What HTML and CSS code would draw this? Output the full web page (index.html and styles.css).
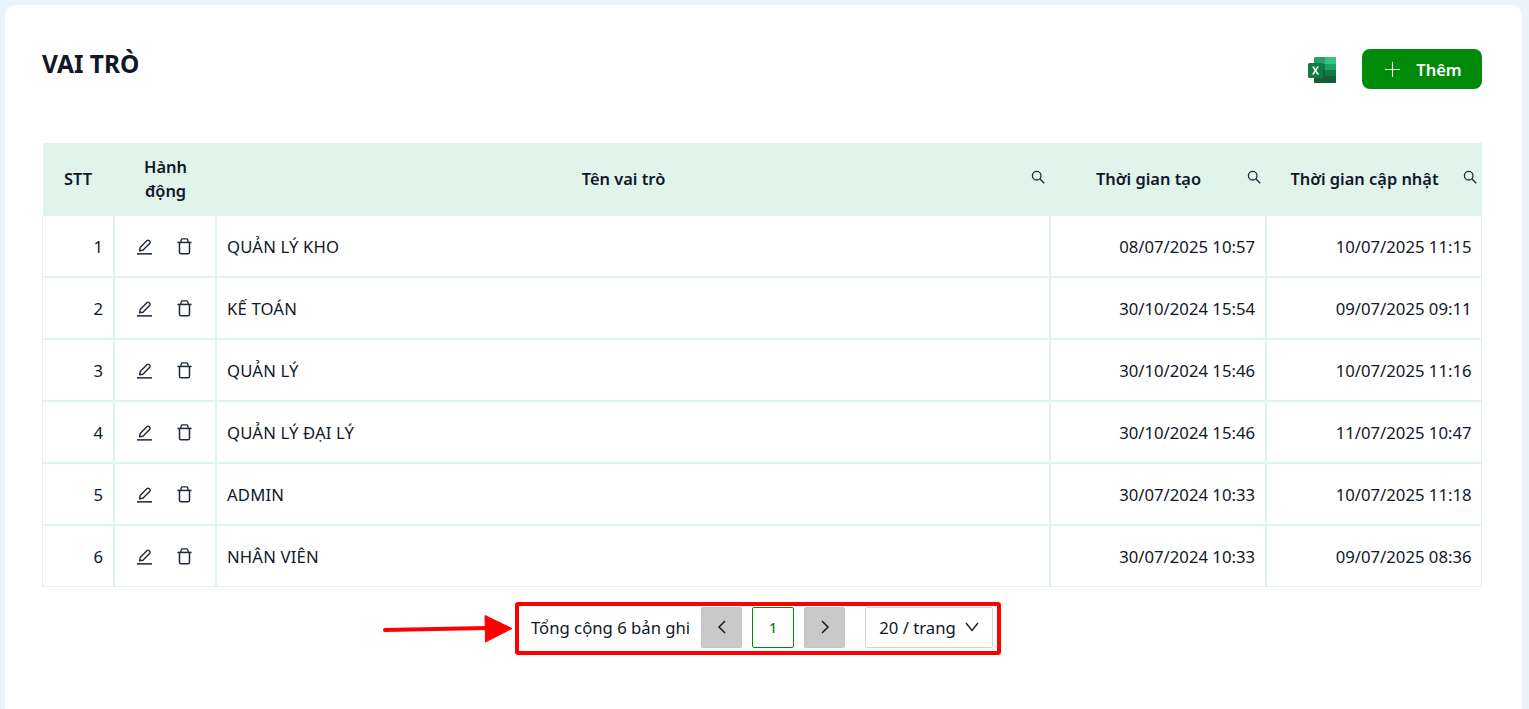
FILE: index.html
```html
<!DOCTYPE html>
<html lang="vi">
<head>
<meta charset="utf-8">
<title>Vai trò</title>
<link rel="stylesheet" href="styles.css">
</head>
<body>
<svg class="sprite" width="0" height="0" aria-hidden="true">
  <defs>
    <symbol id="ic-search" viewBox="0 0 14 14"><circle cx="5.700" cy="5.700" r="4.300" fill="none" stroke="currentColor" stroke-width="1.300"/><path d="M8.800 8.800l4.400 4.400" stroke="currentColor" stroke-width="1.400" fill="none"/></symbol>
    <symbol id="ic-edit" viewBox="0 0 18 18"><path d="M1 16.800h16" stroke="currentColor" stroke-width="1.600" fill="none"/><path d="M3.800 13.500l.7-3.500 7.200-7.300a1.400 1.400 0 0 1 2 0l.9.900a1.400 1.400 0 0 1 0 2l-7.300 7.300z" stroke="currentColor" stroke-width="1.500" fill="none" stroke-linejoin="round"/></symbol>
    <symbol id="ic-trash" viewBox="0 0 18 18"><path d="M1.500 4.700h15" stroke="currentColor" stroke-width="1.600" fill="none"/><path d="M5 4.500l.6-2.700a1 1 0 0 1 1-.8h4.800a1 1 0 0 1 1 .8l.6 2.700" stroke="currentColor" stroke-width="1.400" fill="none"/><path d="M3.700 4.700v10.400a1.700 1.700 0 0 0 1.700 1.700h7.200a1.700 1.700 0 0 0 1.700-1.700V4.700" stroke="currentColor" stroke-width="1.600" fill="none"/></symbol>
  </defs>
</svg>
<main class="card">
  <header class="top">
    <h1 class="title">VAI TRÒ</h1>
    <div class="actions">
      <svg class="excel" viewBox="0 0 28 26" width="28" height="26" aria-label="Excel">
        <rect x="6" y="0" width="22" height="26" rx="1.500" fill="#21a366"/>
        <rect x="17" y="0" width="11" height="7" fill="#33c481"/>
        <rect x="6" y="7" width="11" height="6" fill="#107c41"/>
        <rect x="17" y="7" width="11" height="6" fill="#21a366"/>
        <rect x="6" y="13" width="11" height="6" fill="#185c37"/>
        <rect x="17" y="13" width="11" height="6" fill="#107c41"/>
        <rect x="6" y="19" width="22" height="7" rx="1" fill="#185c37"/>
        <rect x="0" y="6" width="15" height="15" rx="1.500" fill="#107c41"/>
        <path d="M4 9.500h2l1.500 2.700L9 9.500h1.900l-2.400 4 2.500 4H9l-1.500-2.800L6 17.500H4l2.500-4z" fill="#fff"/>
      </svg>
      <button class="add" type="button">
        <svg viewBox="0 0 15 15" width="15" height="15"><path d="M7.500 0v15M0 7.500h15" stroke="#fff" stroke-width="1.100" fill="none"/></svg>
        <span>Thêm</span>
      </button>
    </div>
  </header>

  <table class="grid">
    <colgroup>
      <col class="c-stt"><col class="c-act"><col class="c-name"><col class="c-time"><col class="c-time">
    </colgroup>
    <thead>
      <tr>
        <th>STT</th>
        <th class="th-act">Hành động</th>
        <th class="th-s"><span>Tên vai trò</span><svg class="search"><use href="#ic-search"/></svg></th>
        <th class="th-s"><span>Thời gian tạo</span><svg class="search"><use href="#ic-search"/></svg></th>
        <th class="th-s"><span>Thời gian cập nhật</span><svg class="search"><use href="#ic-search"/></svg></th>
      </tr>
    </thead>
    <tbody>
      <tr><td class="num">1</td><td class="ops"><svg class="op"><use href="#ic-edit"/></svg><svg class="op"><use href="#ic-trash"/></svg></td><td class="name">QUẢN LÝ KHO</td><td class="num">08/07/2025 10:57</td><td class="num">10/07/2025 11:15</td></tr>
      <tr><td class="num">2</td><td class="ops"><svg class="op"><use href="#ic-edit"/></svg><svg class="op"><use href="#ic-trash"/></svg></td><td class="name">KẾ TOÁN</td><td class="num">30/10/2024 15:54</td><td class="num">09/07/2025 09:11</td></tr>
      <tr><td class="num">3</td><td class="ops"><svg class="op"><use href="#ic-edit"/></svg><svg class="op"><use href="#ic-trash"/></svg></td><td class="name">QUẢN LÝ</td><td class="num">30/10/2024 15:46</td><td class="num">10/07/2025 11:16</td></tr>
      <tr><td class="num">4</td><td class="ops"><svg class="op"><use href="#ic-edit"/></svg><svg class="op"><use href="#ic-trash"/></svg></td><td class="name">QUẢN LÝ ĐẠI LÝ</td><td class="num">30/10/2024 15:46</td><td class="num">11/07/2025 10:47</td></tr>
      <tr><td class="num">5</td><td class="ops"><svg class="op"><use href="#ic-edit"/></svg><svg class="op"><use href="#ic-trash"/></svg></td><td class="name">ADMIN</td><td class="num">30/07/2024 10:33</td><td class="num">10/07/2025 11:18</td></tr>
      <tr><td class="num">6</td><td class="ops"><svg class="op"><use href="#ic-edit"/></svg><svg class="op"><use href="#ic-trash"/></svg></td><td class="name">NHÂN VIÊN</td><td class="num">30/07/2024 10:33</td><td class="num">09/07/2025 08:36</td></tr>
    </tbody>
  </table>

  <div class="pager-row">
    <svg class="arrow" viewBox="0 0 131 32" width="131" height="32" aria-hidden="true">
      <path d="M2 18L104 16" stroke="#f00" stroke-width="4" stroke-linecap="round" fill="none"/>
      <path d="M102 3.500l27 13L102.500 30z" fill="#f00" stroke="#f00" stroke-width="1" stroke-linejoin="round"/>
    </svg>
    <nav class="pager">
      <span class="total">Tổng cộng 6 bản ghi</span>
      <button class="pg pg-nav" type="button"><svg viewBox="0 0 12 14" width="12" height="14"><path d="M9 1L3 7l6 6" stroke="#1a1a1a" stroke-width="1.500" fill="none"/></svg></button>
      <button class="pg pg-cur" type="button">1</button>
      <button class="pg pg-nav" type="button"><svg viewBox="0 0 12 14" width="12" height="14"><path d="M3 1l6 6-6 6" stroke="#1a1a1a" stroke-width="1.500" fill="none"/></svg></button>
      <div class="size"><span>20 / trang</span><svg viewBox="0 0 14 10" width="14" height="10"><path d="M1 1l6 7.500L13 1" stroke="#1a1a1a" stroke-width="1.400" fill="none"/></svg></div>
    </nav>
  </div>
</main>
</body>
</html>
```

FILE: styles.css
```css
* { box-sizing: border-box; }
html, body { height: 100%; }
body {
  margin: 0;
  padding: 5px 7px 0 5px;
  background: #eaf4fb;
  color: #111827;
  font-family: "Noto Sans", "Open Sans", sans-serif;
  font-size: 16.7px;
  overflow: hidden;
}
.sprite { position: absolute; }
.card {
  background: #fff;
  border-radius: 10px 10px 0 0;
  padding: 0 40px 0 37px;
  height: 100%;
}
.top {
  display: flex;
  justify-content: space-between;
  align-items: flex-start;
  height: 138px;
  padding-top: 44px;
}
.title {
  margin: 0;
  font-size: 24.500px;
  font-weight: 700;
  line-height: 29px;
}
.actions { display: flex; align-items: center; gap: 26px; }
.excel { display: block; margin-top: 1px; }
.add {
  width: 120px;
  height: 40px;
  border: 0;
  border-radius: 8px;
  padding: 0 0 0 3px;
  background: #008a0a;
  color: #fff;
  font: 600 16.500px "Noto Sans", sans-serif;
  display: flex;
  align-items: center;
  justify-content: center;
  gap: 16px;
}
.grid {
  width: 1439px;
  table-layout: fixed;
  border-collapse: collapse;
}
.c-stt { width: 71px; }
.c-act { width: 102px; }
.c-name { width: 834px; }
.c-time { width: 216px; }
thead tr { height: 73px; background: #e0f4ec; }
th {
  position: relative;
  padding: 0 10px 2px;
  font-weight: 600;
  font-size: 16.400px;
  line-height: 24px;
  text-align: center;
}
.th-s { padding-right: 28px; }
.th-act { padding: 0 25px 2px 27px; }
.search {
  position: absolute;
  right: 5px;
  top: 27px;
  width: 14px;
  height: 14px;
  color: #1f2937;
}
tbody tr { height: 62px; }
tbody tr:first-child { height: 61px; }
tbody tr:last-child { height: 61px; }
td {
  border: 2px solid #e0f4ec;
  padding: 0 9.500px 0 10.500px;
  font-size: 16.700px;
  white-space: nowrap;
}
tbody tr:first-child td { border-top: 0; }
tbody tr:last-child td { border-bottom-width: 1px; padding-top: 1px; }
td:first-child { border-left-width: 1px; }
td:last-child { border-right-width: 1px; }
.num { text-align: right; }
.name { letter-spacing: .15px; }
td.ops { padding: 0; text-align: center; }
.op {
  width: 17px;
  height: 17px;
  color: #1f2937;
  vertical-align: -2px;
  margin: 0 11.500px;
}
.pager-row {
  display: flex;
  justify-content: flex-end;
  align-items: center;
  width: 959px;
  margin-top: 15px;
  position: relative;
}
.arrow { position: absolute; left: 341px; top: 10px; }
.pager {
  display: flex;
  align-items: center;
  height: 53px;
  width: 486px;
  border: 4px solid #f00;
  border-radius: 3px;
  padding: 0 0 2px 12px;
}
.total { width: 170px; white-space: nowrap; }
.pg {
  width: 41px;
  height: 41px;
  border-radius: 2px;
  display: flex;
  align-items: center;
  justify-content: center;
  padding: 0;
}
.pg-nav { background: #c9c9c9; border: 1px solid #c4c4c4; }
.pg-cur {
  width: 42px;
  margin: 0 10px;
  background: #fff;
  border: 1px solid #008a0a;
  color: #008a0a;
  font: 500 14px "Noto Sans", sans-serif;
}
.size {
  margin-left: 20px;
  width: 128px;
  height: 41px;
  border: 1px solid #d4d4d4;
  border-radius: 2px;
  display: flex;
  align-items: center;
  justify-content: center;
  gap: 9px;
}
```
